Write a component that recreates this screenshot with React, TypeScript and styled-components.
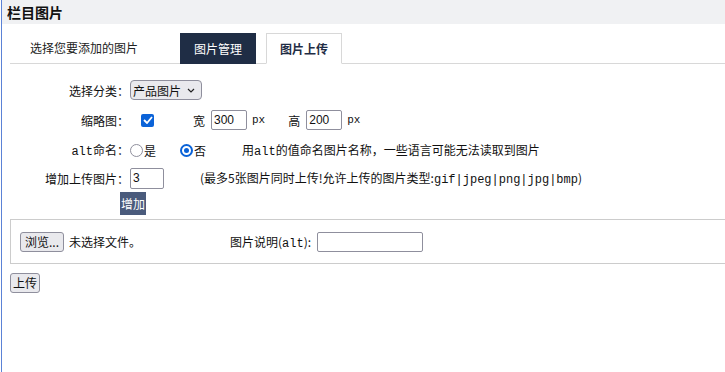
import React, { useState } from 'react'
import styled, { createGlobalStyle } from 'styled-components'

const GlobalStyles = createGlobalStyle`
  html, body {
    margin: 0;
    padding: 0;
    background: #ffffff;
  }
  body {
    font-family: "Liberation Sans", "Noto Sans CJK SC", sans-serif;
    font-size: 12px;
    color: #111111;
  }
`

const Frame = styled.div`
  margin-left: 1px;
  border-left: 1px solid #5b82d6;
  min-height: 372px;
  box-sizing: border-box;
  overflow: hidden;
`

const TitleBar = styled.div`
  height: 24px;
  background: #f0f1f3;
  display: flex;
  align-items: center;
  padding-left: 5px;
  font-family: "Noto Sans CJK SC", sans-serif;
  font-size: 14px;
  font-weight: 700;
  color: #111111;
`

const TabBar = styled.div`
  display: flex;
  align-items: flex-end;
  height: 39px;
  margin-left: 8px;
  border-bottom: 1px solid #d8d8d8;
`

const TabHint = styled.div`
  width: 170px;
  height: 31px;
  display: flex;
  align-items: center;
  padding-left: 20px;
  box-sizing: border-box;
  font-family: "Noto Sans CJK SC", sans-serif;
  font-size: 12px;
  color: #222222;
`

const Tab = styled.div<{ $active?: boolean }>`
  width: 76px;
  height: 31px;
  margin-right: 10px;
  margin-bottom: -1px;
  display: flex;
  align-items: center;
  justify-content: center;
  box-sizing: border-box;
  font-family: "Noto Sans CJK SC", sans-serif;
  font-size: 12px;
  font-weight: ${p => (p.$active ? 700 : 400)};
  color: ${p => (p.$active ? '#1f2d45' : '#ffffff')};
  background: ${p => (p.$active ? '#ffffff' : '#1f2d45')};
  border: ${p => (p.$active ? '1px solid #d8d8d8' : 'none')};
  border-bottom: ${p => (p.$active ? '1px solid #ffffff' : 'none')};
`

const Form = styled.div`
  padding-top: 12px;
`

const Row = styled.div<{ $h: number }>`
  display: grid;
  grid-template-columns: 127px 1fr;
  column-gap: 1px;
  align-items: center;
  height: ${p => p.$h}px;
`

const Label = styled.div`
  text-align: right;
  font-family: "Noto Sans CJK SC", sans-serif;
  font-size: 12px;
  color: #111111;
  white-space: nowrap;
`

const Controls = styled.div`
  display: flex;
  align-items: center;
  font-family: "Noto Sans CJK SC", sans-serif;
  font-size: 12px;
  white-space: nowrap;
`

const Mono = styled.span<{ $size?: number }>`
  font-family: "Liberation Mono", monospace;
  font-size: ${p => p.$size ?? 11}px;
`

const Select = styled.div`
  width: 72px;
  height: 20px;
  box-sizing: border-box;
  border: 1px solid #8f8f9d;
  border-radius: 4px;
  background: #e9e9ed;
  display: flex;
  align-items: center;
  justify-content: space-between;
  padding: 0 6px 0 2px;
  font-family: "Noto Sans CJK SC", sans-serif;
  font-size: 12px;
`

const Check = styled.span`
  width: 13px;
  height: 13px;
  border-radius: 2px;
  background: #0b63d8;
  display: inline-flex;
  align-items: center;
  justify-content: center;
  margin-left: 11px;
`

const TextBox = styled.input<{ $w: number }>`
  width: ${p => p.$w}px;
  height: 20px;
  box-sizing: border-box;
  border: 1px solid #8f8f9d;
  border-radius: 2px;
  padding: 0 2px;
  font-family: "Liberation Sans", sans-serif;
  font-size: 12px;
  color: #111111;
  outline: none;
`

const Radio = styled.span<{ $on?: boolean }>`
  width: 13px;
  height: 13px;
  border-radius: 50%;
  box-sizing: border-box;
  border: ${p => (p.$on ? '2px solid #0b63d8' : '1px solid #8f8f9d')};
  display: inline-flex;
  align-items: center;
  justify-content: center;

  &::after {
    content: '';
    display: ${p => (p.$on ? 'block' : 'none')};
    width: 5px;
    height: 5px;
    border-radius: 50%;
    background: #0b63d8;
  }
`

const AddButton = styled.button`
  margin-left: 118px;
  height: 23px;
  padding: 0 1px;
  border: 0;
  background: #4a5b7c;
  color: #ffffff;
  font-family: "Noto Sans CJK SC", sans-serif;
  font-size: 12px;
`

const UploadBox = styled.div`
  margin: 4px -4px 0 8px;
  height: 43px;
  border: 1px solid #cccccc;
  display: flex;
  align-items: center;
  padding-left: 9px;
  font-family: "Noto Sans CJK SC", sans-serif;
  font-size: 12px;
`

const GreyButton = styled.button`
  height: 20px;
  padding: 0 4px;
  box-sizing: border-box;
  border: 1px solid #8f8f9d;
  border-radius: 3px;
  background: #e9e9ed;
  color: #111111;
  font-family: "Noto Sans CJK SC", sans-serif;
  font-size: 12px;
  line-height: 1;
`

const SubmitRow = styled.div`
  padding: 9px 0 0 8px;

  ${GreyButton} {
    padding: 0 2px;
  }
`

const App = () => {
  const [count, setCount] = useState('3')
  const [width, setWidth] = useState('300')
  const [height, setHeight] = useState('200')

  return (
    <>
      <GlobalStyles />
      <Frame>
        <TitleBar>栏目图片</TitleBar>
        <TabBar>
          <TabHint>选择您要添加的图片</TabHint>
          <Tab>图片管理</Tab>
          <Tab $active>图片上传</Tab>
        </TabBar>

        <Form>
          <Row $h={28}>
            <Label>选择分类：</Label>
            <Controls>
              <Select>
                <span>产品图片</span>
                <svg width="8" height="5" viewBox="0 0 8 5">
                  <path d="M1 1l3 3 3-3" fill="none" stroke="#222" strokeWidth="1.2" />
                </svg>
              </Select>
            </Controls>
          </Row>

          <Row $h={32}>
            <Label>缩略图：</Label>
            <Controls>
              <Check>
                <svg width="10" height="8" viewBox="0 0 10 8">
                  <path d="M1 4l3 3 5-6" fill="none" stroke="#fff" strokeWidth="1.8" />
                </svg>
              </Check>
              <span style={{ marginLeft: 39 }}>宽</span>
              <TextBox $w={36} value={width} onChange={e => setWidth(e.target.value)} style={{ marginLeft: 6 }} />
              <Mono style={{ marginLeft: 5 }}>px</Mono>
              <span style={{ marginLeft: 23 }}>高</span>
              <TextBox $w={36} value={height} onChange={e => setHeight(e.target.value)} style={{ marginLeft: 6 }} />
              <Mono style={{ marginLeft: 5 }}>px</Mono>
            </Controls>
          </Row>

          <Row $h={28}>
            <Label><Mono $size={12}>alt</Mono>命名：</Label>
            <Controls>
              <Radio />
              <span style={{ marginLeft: 1 }}>是</span>
              <span style={{ marginLeft: 24 }} />
              <Radio $on />
              <span style={{ marginLeft: 1 }}>否</span>
              <span style={{ marginLeft: 36 }}>用<Mono $size={12}>alt</Mono>的值命名图片名称，一些语言可能无法读取到图片</span>
            </Controls>
          </Row>

          <Row $h={28}>
            <Label>增加上传图片：</Label>
            <Controls>
              <TextBox $w={34} value={count} onChange={e => setCount(e.target.value)} style={{ height: 21 }} />
              <span style={{ marginLeft: 36 }}>
                (最多5张图片同时上传!允许上传的图片类型:<Mono $size={12}>gif|jpeg|png|jpg|bmp</Mono>)
              </span>
            </Controls>
          </Row>

          <AddButton>增加</AddButton>
        </Form>

        <UploadBox>
          <GreyButton>浏览...</GreyButton>
          <span style={{ marginLeft: 5 }}>未选择文件。</span>
          <span style={{ marginLeft: 89 }}>图片说明(<Mono $size={12}>alt</Mono>):</span>
          <TextBox $w={106} defaultValue="" style={{ marginLeft: 6, height: 20 }} />
        </UploadBox>

        <SubmitRow>
          <GreyButton>上传</GreyButton>
        </SubmitRow>
      </Frame>
    </>
  )
}

export default App
